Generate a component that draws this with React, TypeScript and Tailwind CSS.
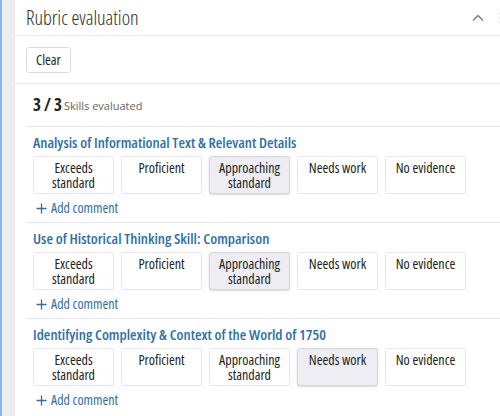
import React from "react";

const levels = ["Exceeds standard", "Proficient", "Approaching standard", "Needs work", "No evidence"];

const skills = [
  { title: "Analysis of Informational Text & Relevant Details", selected: 2 },
  { title: "Use of Historical Thinking Skill: Comparison", selected: 2 },
  { title: "Identifying Complexity & Context of the World of 1750", selected: 3 },
];

function Skill({ title, selected }: { title: string; selected: number }) {
  return (
    <div className="border-t border-[#e6e6e6] pl-[7px] pt-[6px] pb-[5px]">
      <div className="h-[18px] leading-[18px] text-[15px] font-semibold font-stretch-condensed text-[#2f6fa6] whitespace-nowrap">{title}</div>
      <div className="mt-[5px] flex gap-[7px]">
        {levels.map((l, i) => (
          <div
            key={l}
            className={
              i === selected
                ? "w-[81px] h-[38px] rounded-[3px] border border-[#d4d4dc] bg-[#ededf3] shadow-[0_1px_2px_rgba(0,0,0,0.15)] text-center text-[14px] leading-[15px] pt-[3px] px-[2px] text-[#222] font-stretch-condensed"
                : "w-[81px] h-[38px] rounded-[3px] border border-[#e6e6e6] bg-white text-center text-[14px] leading-[15px] pt-[3px] px-[2px] text-[#222] font-stretch-condensed"
            }
          >
            {l}
          </div>
        ))}
      </div>
      <div className="mt-[5px] h-[18px] leading-[18px] text-[14px] text-[#2f6fa6] pl-[3px] flex items-center gap-[4px] font-stretch-condensed">
        <svg width="11" height="11" viewBox="0 0 11 11" fill="none" stroke="#2f6fa6" strokeWidth="1.3">
          <path d="M5.5 0.5v10M0.5 5.5h10" />
        </svg>
        <span>Add comment</span>
      </div>
    </div>
  );
}

export default function App() {
  return (
    <div
      className="w-[500px] h-[416px] flex overflow-hidden bg-white text-[#222]"
      style={{ fontFamily: '"Open Sans", "Noto Sans", sans-serif' }}
    >
      <div className="w-[15px] shrink-0 bg-[#ececec] border-l-2 border-[#8cb6ee]" />
      <div className="flex-1 min-w-0 flex flex-col">
        <div className="h-[36px] shrink-0 border-b border-[#e8e8e8] flex items-center justify-between pl-[11px]">
          <span className="text-[20px] font-light font-stretch-condensed text-[#2a2a2a] leading-[24px]">Rubric evaluation</span>
          <div className="flex items-center gap-[14px] mr-[-8px]">
            <svg width="12" height="8" viewBox="0 0 12 8" fill="none" stroke="#777" strokeWidth="1.3">
              <path d="M1 6.5L6 1.5L11 6.5" />
            </svg>
            <svg width="10" height="14" viewBox="0 0 10 14" fill="#777">
              <circle cx="3" cy="2.5" r="1.3" />
              <circle cx="3" cy="7" r="1.3" />
              <circle cx="3" cy="11.5" r="1.3" />
            </svg>
          </div>
        </div>
        <div className="h-[48px] shrink-0 border-b border-[#e8e8e8] flex items-center pl-[11px]">
          <button className="h-[26px] px-[9px] rounded-[3px] border border-[#dcdcdc] bg-white text-[14px] text-[#222] font-stretch-condensed">
            Clear
          </button>
        </div>
        <div className="pl-[11px]">
          <div className="h-[42px] pl-[7px] flex items-center gap-[2px]">
            <span className="text-[17px] font-bold font-stretch-condensed text-[#222]">3 / 3</span>
            <span className="text-[11px] text-[#666] mt-[2px]">Skills evaluated</span>
          </div>
          {skills.map((s) => (
            <Skill key={s.title} title={s.title} selected={s.selected} />
          ))}
        </div>
      </div>
    </div>
  );
}
